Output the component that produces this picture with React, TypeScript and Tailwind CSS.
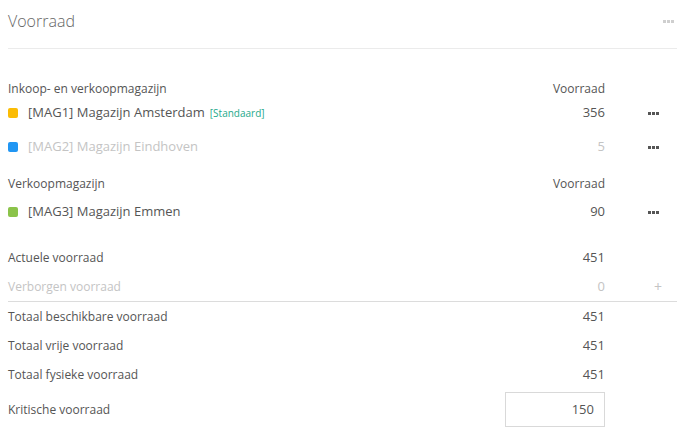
import type { ReactNode } from "react";

type Warehouse = {
  code: string;
  name: string;
  color: string;
  stock: number;
  isDefault?: boolean;
  hidden?: boolean;
};

const purchaseSales: Warehouse[] = [
  { code: "MAG1", name: "Magazijn Amsterdam", color: "bg-[#fbbc05]", stock: 356, isDefault: true },
  { code: "MAG2", name: "Magazijn Eindhoven", color: "bg-[#2196f3]", stock: 5, hidden: true },
];

const salesOnly: Warehouse[] = [
  { code: "MAG3", name: "Magazijn Emmen", color: "bg-[#8bc34a]", stock: 90 },
];

function Dots({ light = false }: { light?: boolean }) {
  const dot = light ? "bg-[#cfcfcf]" : "bg-[#555]";
  return (
    <span className="flex gap-[1px]">
      <span className={`block w-[3px] h-[3px] ${dot}`} />
      <span className={`block w-[3px] h-[3px] ${dot}`} />
      <span className={`block w-[3px] h-[3px] ${dot}`} />
    </span>
  );
}

function Row({
  label,
  value,
  action,
  className = "",
}: {
  label: ReactNode;
  value: ReactNode;
  action?: ReactNode;
  className?: string;
}) {
  return (
    <div className={`grid grid-cols-[1fr_100px_72px] items-center ${className}`}>
      <div className="min-w-0">{label}</div>
      <div className="text-right">{value}</div>
      <div className="flex items-center pl-[43px]">{action}</div>
    </div>
  );
}

function WarehouseRow({ w, className = "" }: { w: Warehouse; className?: string }) {
  const tone = w.hidden ? "text-[#c4c4c4]" : "text-[#555]";
  return (
    <Row
      className={`h-6 text-[13px] ${tone} ${className}`}
      label={
        <div className="flex items-center">
          <span className={`w-[10px] h-[10px] rounded-[2px] ${w.color}`} />
          <span className="ml-[10px]">
            [{w.code}] {w.name}
          </span>
          {w.isDefault && (
            <span className="ml-[5px] text-[10px] text-[#26a98b]">[Standaard]</span>
          )}
        </div>
      }
      value={w.stock}
      action={<Dots />}
    />
  );
}

export default function App() {
  return (
    <div
      className="w-[685px] h-[442px] bg-white px-2 text-[#555]"
      style={{ fontFamily: '"Open Sans", "Liberation Sans", sans-serif' }}
    >
      <div className="h-[49px] border-b border-[#ebebeb] flex items-start justify-between">
        <h2 className="mt-[9px] text-[16px] font-light text-[#666] leading-6">Voorraad</h2>
        <div className="mt-[20px] mr-[3px]">
          <Dots light />
        </div>
      </div>

      <Row
        className="mt-[28px] h-6 text-[12px] text-[#555]"
        label="Inkoop- en verkoopmagazijn"
        value="Voorraad"
      />
      <WarehouseRow w={purchaseSales[0]} />
      <WarehouseRow w={purchaseSales[1]} className="mt-[10px]" />

      <Row
        className="mt-[13px] h-6 text-[12px] text-[#555]"
        label="Verkoopmagazijn"
        value="Voorraad"
      />
      {salesOnly.map((w) => (
        <WarehouseRow key={w.code} w={w} className="mt-1" />
      ))}

      <div className="mt-[19px] text-[12px]">
        <Row className="h-[29px]" label="Actuele voorraad" value={<span className="text-[13px]">451</span>} />
        <Row
          className="h-[30px] border-b border-[#dcdcdc] text-[#c4c4c4]"
          label="Verborgen voorraad"
          value={<span className="text-[13px]">0</span>}
          action={<span className="text-[14px] leading-none ml-[6px] text-[#c4c4c4]">+</span>}
        />
        <Row className="h-[29px]" label="Totaal beschikbare voorraad" value={<span className="text-[13px]">451</span>} />
        <Row className="h-[29px]" label="Totaal vrije voorraad" value={<span className="text-[13px]">451</span>} />
        <Row className="h-[29px]" label="Totaal fysieke voorraad" value={<span className="text-[13px]">451</span>} />
        <Row
          className="mt-[3px] h-[35px]"
          label="Kritische voorraad"
          value={
            <div className="h-[35px] border border-[#d9d9d9] flex items-center justify-end pr-[10px] text-[13px]">
              150
            </div>
          }
        />
      </div>
    </div>
  );
}
